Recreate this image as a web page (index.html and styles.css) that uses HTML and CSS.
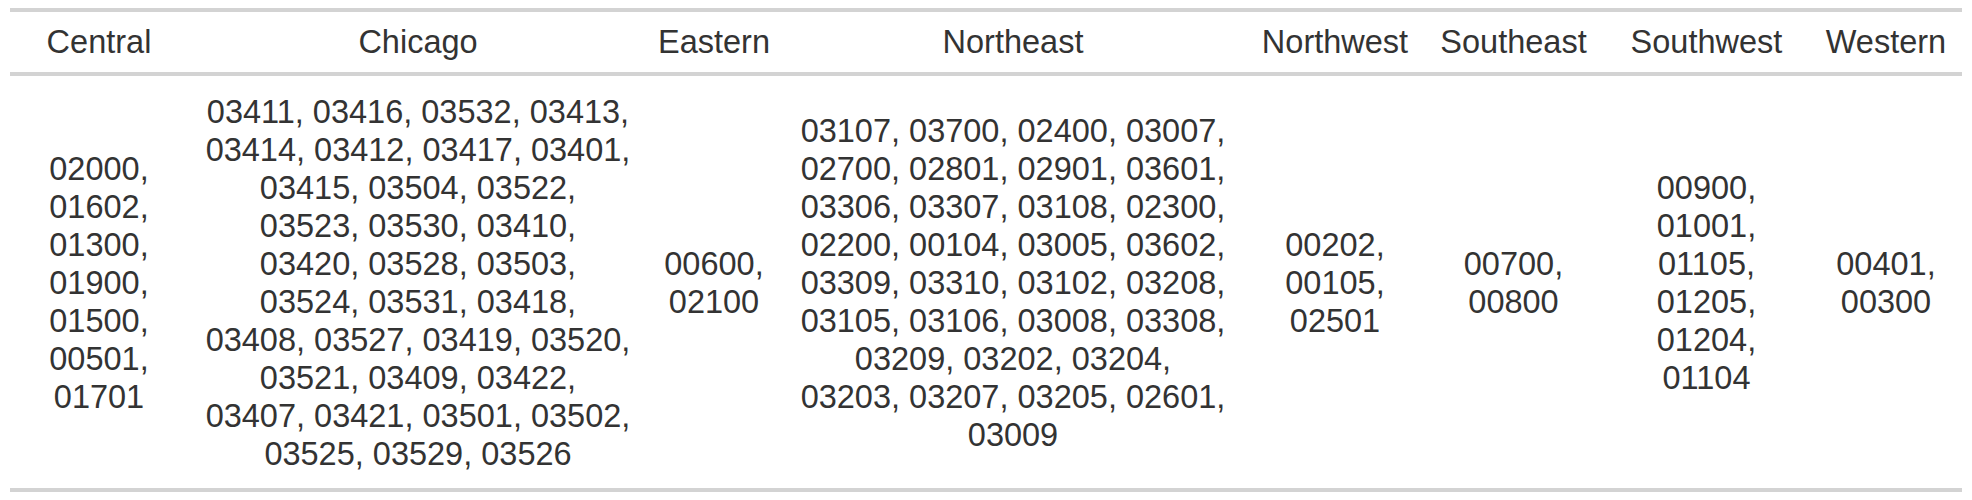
FILE: index.html
```html
<!DOCTYPE html>
<html lang="en">
<head>
<meta charset="utf-8">
<title>Regions</title>
<link rel="stylesheet" href="styles.css">
</head>
<body>
<table class="gt-table">
  <colgroup>
    <col class="c-central">
    <col class="c-chicago">
    <col class="c-eastern">
    <col class="c-northeast">
    <col class="c-northwest">
    <col class="c-southeast">
    <col class="c-southwest">
    <col class="c-western">
  </colgroup>
  <thead>
    <tr>
      <th class="col-head">Central</th>
      <th class="col-head">Chicago</th>
      <th class="col-head">Eastern</th>
      <th class="col-head">Northeast</th>
      <th class="col-head">Northwest</th>
      <th class="col-head">Southeast</th>
      <th class="col-head">Southwest</th>
      <th class="col-head">Western</th>
    </tr>
  </thead>
  <tbody>
    <tr>
      <td class="cell">02000,<br>01602,<br>01300,<br>01900,<br>01500,<br>00501,<br>01701</td>
      <td class="cell">03411, 03416, 03532, 03413,<br>03414, 03412, 03417, 03401,<br>03415, 03504, 03522,<br>03523, 03530, 03410,<br>03420, 03528, 03503,<br>03524, 03531, 03418,<br>03408, 03527, 03419, 03520,<br>03521, 03409, 03422,<br>03407, 03421, 03501, 03502,<br>03525, 03529, 03526</td>
      <td class="cell">00600,<br>02100</td>
      <td class="cell">03107, 03700, 02400, 03007,<br>02700, 02801, 02901, 03601,<br>03306, 03307, 03108, 02300,<br>02200, 00104, 03005, 03602,<br>03309, 03310, 03102, 03208,<br>03105, 03106, 03008, 03308,<br>03209, 03202, 03204,<br>03203, 03207, 03205, 02601,<br>03009</td>
      <td class="cell">00202,<br>00105,<br>02501</td>
      <td class="cell">00700,<br>00800</td>
      <td class="cell">00900,<br>01001,<br>01105,<br>01205,<br>01204,<br>01104</td>
      <td class="cell">00401,<br>00300</td>
    </tr>
  </tbody>
</table>
</body>
</html>
```

FILE: styles.css
```css
html, body {
  background: #ffffff;
}

body {
  margin: 8px 0;
  font-family: "Liberation Sans", Arial, sans-serif;
  color: #333333;
}

.gt-table {
  width: 1952px;
  margin: 0 auto;
  table-layout: fixed;
  border-collapse: separate;
  border-spacing: 0;
  border-top: 4px solid #d3d3d3;
  font-size: 32.5px;
  line-height: 38px;
}

.c-central { width: 178px; }
.c-chicago { width: 460px; }
.c-eastern { width: 132px; }
.c-northeast { width: 466px; }
.c-northwest { width: 178px; }
.c-southeast { width: 179px; }
.c-southwest { width: 207px; }
.c-western { width: 152px; }

.col-head {
  font-weight: normal;
  text-align: center;
  vertical-align: bottom;
  padding: 11px 10px 11px;
  border-bottom: 4px solid #d3d3d3;
  white-space: nowrap;
}

.cell {
  text-align: center;
  vertical-align: middle;
  padding: 17px 10px 15px;
  border-bottom: 4px solid #d3d3d3;
  white-space: nowrap;
}
```
